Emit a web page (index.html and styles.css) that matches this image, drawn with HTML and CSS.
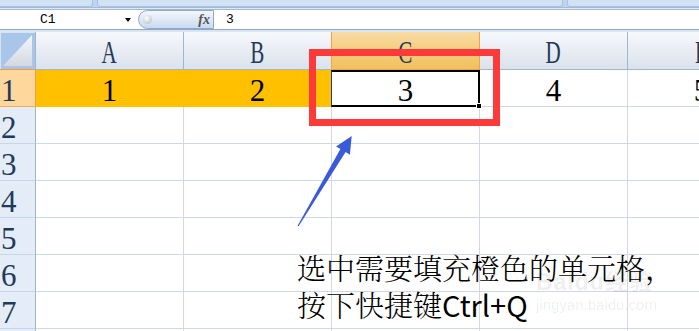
FILE: index.html
```html
<!DOCTYPE html>
<html lang="zh-CN">

<head>
    <meta charset="UTF-8">
    <meta name="viewport" content="width=device-width, initial-scale=1.0">
    <title>Ctrl+Q</title>
    <link rel="stylesheet" href="styles.css">
</head>

<body>
    <!-- ribbon bottom edge -->
    <div class="ribbon">
        <div class="group g1"></div>
        <div class="group g2"></div>
        <div class="group g3"></div>
    </div>
    <div class="ribbon-gap"></div>

    <!-- formula bar -->
    <div class="formula-bar">
        <div class="name-box"><span>C1</span><i class="drop"></i></div>
        <div class="fx-pill"><i class="knob"></i><span class="fx">fx</span></div>
        <div class="formula">3</div>
    </div>
    <div class="bar-gap"></div>

    <!-- sheet -->
    <div class="grid">
        <div class="corner"><i></i></div>
        <div class="col-head"><span>A</span></div>
        <div class="col-head"><span>B</span></div>
        <div class="col-head sel"><span>C</span></div>
        <div class="col-head"><span>D</span></div>
        <div class="col-head"><span>E</span></div>

        <div class="row-head sel">1</div>
        <div class="cell fill">1</div>
        <div class="cell fill">2</div>
        <div class="cell active">3</div>
        <div class="cell">4</div>
        <div class="cell">5</div>

        <div class="row-head">2</div>
        <div class="cell"></div><div class="cell"></div><div class="cell"></div><div class="cell"></div><div class="cell"></div>

        <div class="row-head">3</div>
        <div class="cell"></div><div class="cell"></div><div class="cell"></div><div class="cell"></div><div class="cell"></div>

        <div class="row-head">4</div>
        <div class="cell"></div><div class="cell"></div><div class="cell"></div><div class="cell"></div><div class="cell"></div>

        <div class="row-head">5</div>
        <div class="cell"></div><div class="cell"></div><div class="cell"></div><div class="cell"></div><div class="cell"></div>

        <div class="row-head">6</div>
        <div class="cell"></div><div class="cell"></div><div class="cell"></div><div class="cell"></div><div class="cell"></div>

        <div class="row-head">7</div>
        <div class="cell"></div><div class="cell"></div><div class="cell"></div><div class="cell"></div><div class="cell"></div>

        <div class="row-head"></div>
        <div class="cell"></div><div class="cell"></div><div class="cell"></div><div class="cell"></div><div class="cell"></div>
    </div>

    <!-- annotation on top of the sheet -->
    <div class="mark"></div>

    <svg class="arrow" width="70" height="100" viewBox="0 0 70 100">
        <polygon points="7.6,95.7 50.4,19.1 46.1,16.5 61.7,6 59.9,24.7 55.6,22.1 8.6,96.3" fill="#3a5bd8" />
    </svg>

    <div class="note">
        选中需要填充橙色的单元格，<br>
        按下快捷键<span class="key">Ctrl+Q</span>
    </div>

    <div class="watermark">
        <div class="wm-logo">Baidu经验</div>
        <div class="wm-url">jingyan.baidu.com</div>
    </div>
</body>

</html>
```

FILE: styles.css
```css
body {
    margin: 0;
    width: 699px;
    height: 331px;
    overflow: hidden;
    position: relative;
    background-color: #fff;
    font-family: "Liberation Serif", serif;
}

/* ribbon */
.ribbon {
    display: flex;
    height: 7px;
    background-color: #bfd4ee;
    border-bottom: 1px solid #a2bbd9;
}

.group {
    box-sizing: border-box;
    background-color: #d2e2f5;
    border: 1px solid #a9c2df;
    border-top: none;
    border-radius: 0 0 3px 3px;
}

.g1 {
    width: 95px;
    margin-left: -2px;
}

.g2 {
    width: 466px;
    margin-left: 4px;
}

.g3 {
    flex: 1;
    margin-left: 4px;
    margin-right: -4px;
}

.ribbon-gap {
    height: 1px;
    background-color: #dfe9f5;
}

/* formula bar */
.formula-bar {
    display: flex;
    height: 19px;
    background-color: #fff;
    border-top: 1px solid #a7b8cb;
    border-bottom: 1px solid #8ea7c2;
    font-family: "Liberation Mono", monospace;
    font-size: 13px;
    color: #000;
}

.name-box {
    box-sizing: border-box;
    width: 138px;
    padding-left: 40px;
    display: flex;
    align-items: center;
}

.drop {
    margin-left: auto;
    margin-right: 7px;
    border-top: 4px solid #000;
    border-left: 3.5px solid transparent;
    border-right: 3.5px solid transparent;
}

.fx-pill {
    box-sizing: border-box;
    width: 76px;
    display: flex;
    align-items: center;
    border: 1px solid #8fa9cb;
    border-radius: 10px 0 0 10px;
    background: linear-gradient(#f3f7fc, #cbdaef);
}

.knob {
    width: 9px;
    height: 9px;
    margin-left: 4px;
    border-radius: 50%;
    background: radial-gradient(circle at 40% 35%, #fff, #aeb7c3);
}

.fx {
    margin-left: auto;
    margin-right: 3px;
    font-family: "Liberation Serif", serif;
    font-style: italic;
    font-weight: bold;
    font-size: 14px;
    color: #555;
}

.formula {
    padding-left: 12px;
    line-height: 19px;
}

.bar-gap {
    height: 2px;
    background-color: #dbe5f1;
}

/* sheet grid */
.grid {
    display: grid;
    width: max-content;
    grid-template-columns: 36px repeat(5, 148px);
    grid-template-rows: 38px;
    grid-auto-rows: 37px;
    font-size: 31px;
}

.grid > div {
    box-sizing: border-box;
    line-height: 37px;
    padding-top: 2px;
}

.corner {
    position: relative;
    background-color: #a9c5ea;
    border-right: 1px solid #9eb6ce;
    border-bottom: 1px solid #f29b3c;
    box-shadow: inset 1px 1px 0 #d6e4f6;
}

.corner i {
    position: absolute;
    left: 3px;
    top: 3px;
    right: 3px;
    bottom: 3px;
    background: linear-gradient(#f4f6f9, #d3d9e3);
    clip-path: polygon(0 100%, 100% 0, 100% 100%);
}

.col-head {
    text-align: center;
    color: #1f3a5a;
    background: linear-gradient(#f6f8fb, #dbe2ec);
    border-right: 1px solid #9fb6cd;
    border-bottom: 1px solid #9fb6cd;
}

.col-head span {
    display: inline-block;
    transform: scaleX(0.68);
}

.col-head.sel {
    background: linear-gradient(#f9dba3, #f1c05d);
    border-right-color: #f0a347;
    border-bottom-color: #eaa54b;
    box-shadow: -1px 0 0 #f0a347;
}

.row-head {
    padding-left: 1px;
    color: #1f3a5a;
    background-color: #e4ecf7;
    border-right: 1px solid #9eb6ce;
    border-bottom: 1px solid #c7d5e6;
}

.row-head.sel {
    background-color: #fdd79b;
    border-right-color: #f0a04a;
    border-bottom-color: #f2a950;
}

.cell {
    text-align: center;
    color: #000;
    border-right: 1px solid #d0d7e5;
    border-bottom: 1px solid #d0d7e5;
}

.cell.fill {
    background-color: #ffc000;
    border-color: transparent;
}

.cell.active {
    position: relative;
}

.cell.active::before {
    content: "";
    position: absolute;
    left: -1px;
    top: 0;
    right: -1px;
    bottom: -1px;
    border: 2px solid #000;
    border-left: 1px solid #1c3c9a;
}

.cell.active::after {
    content: "";
    position: absolute;
    right: -3px;
    bottom: -3px;
    width: 4px;
    height: 4px;
    background-color: #000;
    border: 1px solid #fff;
}

/* annotation */
.mark {
    position: absolute;
    left: 309px;
    top: 49px;
    width: 191px;
    height: 77px;
    box-sizing: border-box;
    border: 7px solid #fd3a3a;
}

.arrow {
    position: absolute;
    left: 290px;
    top: 130px;
}

.note {
    position: absolute;
    left: 297px;
    top: 249px;
    font-family: "Noto Serif CJK SC", "Noto Sans CJK SC", serif;
    font-size: 29px;
    font-weight: 300;
    line-height: 37px;
    color: #000;
    white-space: nowrap;
}

.note .key {
    font-family: "Noto Sans CJK SC", sans-serif;
    font-weight: normal;
}

.watermark {
    position: absolute;
    left: 536px;
    top: 271px;
    color: rgba(0, 0, 0, 0.08);
    font-family: "Liberation Sans", "Noto Sans CJK SC", sans-serif;
    line-height: 1;
}

.wm-logo {
    font-size: 23px;
    font-weight: bold;
    letter-spacing: 1px;
}

.wm-url {
    margin-top: 3px;
    font-size: 15px;
}
```
